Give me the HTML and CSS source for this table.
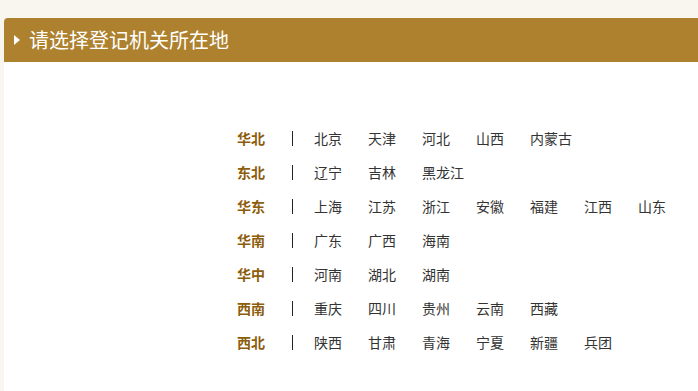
FILE: index.html
```html
<!DOCTYPE html>
<html lang="zh-CN">
<head>
<meta charset="utf-8">
<title>请选择登记机关所在地</title>
<link rel="stylesheet" href="styles.css">
</head>
<body>
<div class="panel">
  <div class="panel-head">
    <span class="arrow"></span>
    <h2 class="panel-title">请选择登记机关所在地</h2>
  </div>
  <div class="panel-body">
    <ul class="regions">
      <li class="region"><span class="region-name">华北</span><span class="sep"></span><a class="area">北京</a><a class="area">天津</a><a class="area">河北</a><a class="area">山西</a><a class="area">内蒙古</a></li>
      <li class="region"><span class="region-name">东北</span><span class="sep"></span><a class="area">辽宁</a><a class="area">吉林</a><a class="area">黑龙江</a></li>
      <li class="region"><span class="region-name">华东</span><span class="sep"></span><a class="area">上海</a><a class="area">江苏</a><a class="area">浙江</a><a class="area">安徽</a><a class="area">福建</a><a class="area">江西</a><a class="area">山东</a></li>
      <li class="region"><span class="region-name">华南</span><span class="sep"></span><a class="area">广东</a><a class="area">广西</a><a class="area">海南</a></li>
      <li class="region"><span class="region-name">华中</span><span class="sep"></span><a class="area">河南</a><a class="area">湖北</a><a class="area">湖南</a></li>
      <li class="region"><span class="region-name">西南</span><span class="sep"></span><a class="area">重庆</a><a class="area">四川</a><a class="area">贵州</a><a class="area">云南</a><a class="area">西藏</a></li>
      <li class="region"><span class="region-name">西北</span><span class="sep"></span><a class="area">陕西</a><a class="area">甘肃</a><a class="area">青海</a><a class="area">宁夏</a><a class="area">新疆</a><a class="area">兵团</a></li>
    </ul>
  </div>
</div>
</body>
</html>
```

FILE: styles.css
```css
html, body {
  margin: 0;
  padding: 0;
}
body {
  background: #f9f6ef;
  font-family: "Noto Sans CJK SC", "Noto Sans", sans-serif;
  overflow: hidden;
}
.panel {
  margin: 18px 0 0 4px;
  width: 694px;
}
.panel-head {
  height: 44px;
  background: #ad812e;
  border-radius: 4px 0 0 0;
  display: flex;
  align-items: center;
  padding-left: 10px;
}
.arrow {
  width: 0;
  height: 0;
  border-top: 5px solid transparent;
  border-bottom: 5px solid transparent;
  border-left: 6px solid #ffffff;
  margin-right: 9px;
}
.panel-title {
  margin: 0;
  font-size: 20px;
  font-weight: normal;
  color: #ffffff;
  line-height: 44px;
}
.panel-body {
  background: #ffffff;
  height: 329px;
  padding: 59px 0 0 233px;
  box-sizing: border-box;
}
.regions {
  list-style: none;
  margin: 0;
  padding: 0;
}
.region {
  display: flex;
  align-items: center;
  height: 34px;
  font-size: 14px;
  white-space: nowrap;
}
.region-name {
  width: 55px;
  font-weight: bold;
  color: #8c5d0c;
}
.sep {
  width: 1px;
  height: 15px;
  background: #222222;
  margin: 1px 21px 0 0;
}
.area {
  color: #333333;
  margin-right: 26px;
  min-width: 28px;
}
```
